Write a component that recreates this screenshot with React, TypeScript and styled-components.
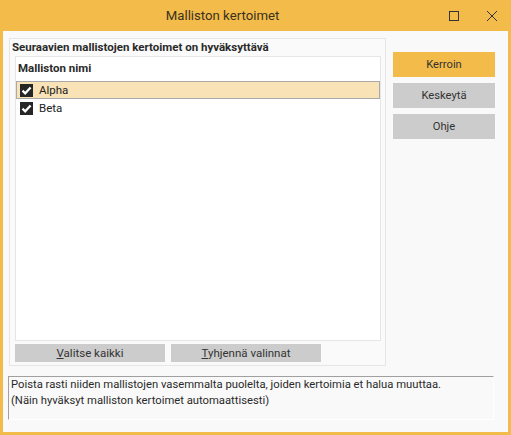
import React, { useState } from "react";
import styled, { createGlobalStyle, css } from "styled-components";

const ORANGE = "#f3bc4a";
const UI_FONT = `Roboto, "Noto Sans", "Liberation Sans", sans-serif`;

const GlobalStyle = createGlobalStyle`
  html, body {
    margin: 0;
    padding: 0;
    background: #ffffff;
  }
  body {
    font-family: ${UI_FONT};
    color: #222;
  }
`;

const Window = styled.div`
  width: 511px;
  height: 435px;
  box-sizing: border-box;
  border: 3px solid ${ORANGE};
  border-top: none;
  background: #f9f9f9;
  display: flex;
  flex-direction: column;
`;

const TitleBar = styled.div`
  height: 31px;
  margin: 0 -3px;
  background: ${ORANGE};
  display: flex;
  align-items: center;
  flex-shrink: 0;
`;

const Title = styled.div`
  flex: 1;
  text-align: center;
  font-size: 13.2px;
  color: #3a3020;
  padding-left: 10px;
`;

const TitleButton = styled.div`
  width: 38px;
  height: 31px;
  display: flex;
  align-items: center;
  justify-content: center;
`;

const Body = styled.div`
  flex: 1;
  display: flex;
  flex-direction: column;
  padding: 7px 13px 0 5px;
`;

const MainRow = styled.div`
  display: flex;
  gap: 7px;
`;

const Group = styled.div`
  width: 377px;
  height: 328px;
  box-sizing: border-box;
  border: 1px solid #e6e6e6;
  margin-left: 1px;
  background: #fafafa;
  display: flex;
  flex-direction: column;
  padding: 0 4px 3px 5px;
`;

const GroupLabel = styled.div`
  font-size: 11.5px;
  font-weight: 700;
  color: #2a2a2a;
  height: 17px;
  line-height: 17px;
  margin-left: -3px;
`;

const List = styled.div`
  flex: 1;
  background: #ffffff;
  border: 1px solid #e6e6e6;
  display: flex;
  flex-direction: column;
`;

const ListHeader = styled.div`
  font-size: 11.5px;
  font-weight: 700;
  color: #2a2a2a;
  height: 24px;
  line-height: 22px;
  padding-left: 2px;
`;

const Row = styled.div<{ $selected?: boolean }>`
  height: 16px;
  display: flex;
  align-items: center;
  gap: 6px;
  padding-left: 3px;
  border: 1px solid transparent;
  font-size: 11.5px;
  color: #222;
  ${({ $selected }) =>
    $selected &&
    css`
      background: #f9e3b6;
      border-color: #a9a9a9;
    `}
`;

const Check = styled.span`
  width: 13px;
  height: 13px;
  background: #262626;
  display: inline-flex;
  align-items: center;
  justify-content: center;
  flex-shrink: 0;
`;

const BottomButtons = styled.div`
  display: flex;
  gap: 6px;
  padding-top: 3px;
`;

const FlatButton = styled.button<{ $primary?: boolean }>`
  border: none;
  background: ${({ $primary }) => ($primary ? ORANGE : "#cccccc")};
  color: #333;
  font-family: ${UI_FONT};
  font-size: 11.5px;
  padding: 0;
  cursor: pointer;
`;

const SmallButton = styled(FlatButton)`
  width: 150px;
  height: 18px;
`;

const SideColumn = styled.div`
  display: flex;
  flex-direction: column;
  gap: 6px;
  padding-top: 14px;
`;

const SideButton = styled(FlatButton)`
  width: 102px;
  height: 25px;
  font-size: 11.2px;
`;

const Hint = styled.div`
  margin-top: 10px;
  width: 486px;
  height: 44px;
  box-sizing: border-box;
  border-top: 1px solid #a0a0a0;
  border-left: 1px solid #a0a0a0;
  border-right: 1px solid #ffffff;
  border-bottom: 1px solid #ffffff;
  padding: 0 0 0 2px;
  font-size: 11.25px;
  line-height: 16px;
  color: #2a2a2a;
`;

const Underline = styled.span`
  text-decoration: underline;
`;

const CheckMark = () => (
  <svg width="11" height="11" viewBox="0 0 11 11">
    <path d="M1.5 5.6 L4.2 8.3 L9.6 2.4" fill="none" stroke="#ffffff" strokeWidth="2.2" />
  </svg>
);

const items = [
  { id: 1, name: "Alpha" },
  { id: 2, name: "Beta" },
];

export default function App() {
  const [checked, setChecked] = useState<Record<number, boolean>>({ 1: true, 2: true });
  const [selected, setSelected] = useState(1);

  return (
    <>
      <GlobalStyle />
      <Window>
        <TitleBar>
          <Title>Malliston kertoimet</Title>
          <TitleButton>
            <svg width="12" height="12" viewBox="0 0 12 12">
              <rect x="1.5" y="1.5" width="9" height="9" fill="none" stroke="#333" strokeWidth="1" />
            </svg>
          </TitleButton>
          <TitleButton>
            <svg width="12" height="12" viewBox="0 0 12 12">
              <path d="M1 1 L11 11 M11 1 L1 11" stroke="#333" strokeWidth="1" />
            </svg>
          </TitleButton>
        </TitleBar>
        <Body>
          <MainRow>
            <Group>
              <GroupLabel>Seuraavien mallistojen kertoimet on hyväksyttävä</GroupLabel>
              <List>
                <ListHeader>Malliston nimi</ListHeader>
                {items.map(item => (
                  <Row key={item.id} $selected={item.id === selected} onClick={() => setSelected(item.id)}>
                    <Check onClick={() => setChecked(c => ({ ...c, [item.id]: !c[item.id] }))}>
                      {checked[item.id] && <CheckMark />}
                    </Check>
                    {item.name}
                  </Row>
                ))}
              </List>
              <BottomButtons>
                <SmallButton><Underline>V</Underline>alitse kaikki</SmallButton>
                <SmallButton><Underline>T</Underline>yhjennä valinnat</SmallButton>
              </BottomButtons>
            </Group>
            <SideColumn>
              <SideButton $primary>Kerroin</SideButton>
              <SideButton>Keskeytä</SideButton>
              <SideButton>Ohje</SideButton>
            </SideColumn>
          </MainRow>
          <Hint>
            Poista rasti niiden mallistojen vasemmalta puolelta, joiden kertoimia et halua muuttaa.
            <br />
            (Näin hyväksyt malliston kertoimet automaattisesti)
          </Hint>
        </Body>
      </Window>
    </>
  );
}
